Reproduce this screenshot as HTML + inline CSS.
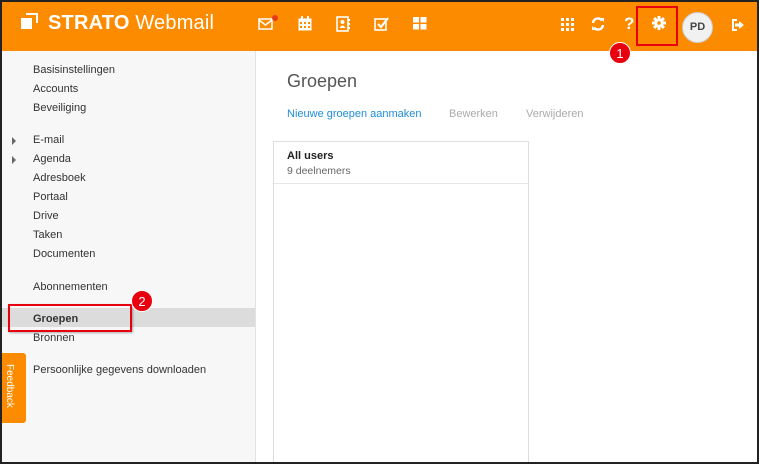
<!DOCTYPE html>
<html><head><meta charset="utf-8"><style>
*{box-sizing:border-box;margin:0;padding:0}
body{width:759px;height:464px;overflow:hidden;background:#222;font-family:"Liberation Sans","DejaVu Sans",sans-serif;position:relative}
#frame{position:absolute;left:2px;top:2px;width:755px;height:460px;background:#fff;overflow:hidden}
#hdr{position:absolute;left:0;top:0;width:755px;height:49px;background:#fd8b00}
#side{position:absolute;left:0;top:49px;width:254px;height:411px;background:#f7f7f7;border-right:1px solid #e2e2e2}
.it{position:absolute;left:31px;font-size:11px;color:#333}
.ar{position:absolute;left:10px;width:0;height:0;border-left:4px solid #666;border-top:4px solid transparent;border-bottom:4px solid transparent}
.w{position:absolute;background:#fff}
svg{position:absolute}
.badge{position:absolute;width:22px;height:22px;border-radius:50%;background:#e8000e;color:#fff;font-size:13px;text-align:center;line-height:22px;border:1px solid #fff}
</style></head><body><div id="frame">
<div id="hdr">
 <div class="w" style="left:19px;top:16px;width:11px;height:11px"></div>
 <div style="position:absolute;left:24px;top:11px;width:12px;height:10px;border-top:2px solid #fff;border-right:2px solid #fff"></div>
 <div style="position:absolute;left:46px;top:10px;font-size:20px;color:#fff;font-weight:bold;letter-spacing:0.2px">STRATO <span style="font-weight:normal">Webmail</span></div>
 <svg style="left:256px;top:13px" width="16" height="16" viewBox="0 0 16 16"><rect x="1" y="4" width="13" height="10" fill="none" stroke="#fff" stroke-width="1.5"/><path d="M1 5 L7.5 10 L14 5" fill="none" stroke="#fff" stroke-width="1.5"/></svg>
 <div style="position:absolute;left:270px;top:13px;width:6px;height:6px;border-radius:50%;background:#e53b1b"></div>
 <svg style="left:296px;top:14px" width="14" height="15" viewBox="0 0 14 15"><rect x="0.5" y="2.5" width="13" height="12" fill="#fff"/><g fill="#fd8b00"><rect x="2" y="6" width="2" height="2"/><rect x="6" y="6" width="2" height="2"/><rect x="10" y="6" width="2" height="2"/><rect x="2" y="10" width="2" height="2"/><rect x="6" y="10" width="2" height="2"/><rect x="10" y="10" width="2" height="2"/></g><rect x="3" y="0" width="2" height="4" fill="#fff"/><rect x="9" y="0" width="2" height="4" fill="#fff"/></svg>
 <svg style="left:334px;top:14px" width="14" height="16" viewBox="0 0 14 16"><rect x="1" y="1" width="11" height="14" fill="none" stroke="#fff" stroke-width="1.6"/><circle cx="6.5" cy="6" r="2" fill="#fff"/><path d="M3.5 12 Q6.5 7 9.5 12Z" fill="#fff"/><rect x="12" y="3" width="2" height="2" fill="#fff"/><rect x="12" y="7" width="2" height="2" fill="#fff"/><rect x="12" y="11" width="2" height="2" fill="#fff"/></svg>
 <svg style="left:372px;top:14px" width="16" height="15" viewBox="0 0 16 15"><rect x="1" y="3" width="11" height="11" fill="none" stroke="#fff" stroke-width="1.6"/><path d="M4 8 L7 11 L14 2" fill="none" stroke="#fff" stroke-width="2.2"/></svg>
 <svg style="left:411px;top:15px" width="14" height="13" viewBox="0 0 14 13"><rect x="0" y="0" width="6" height="5.5" fill="#fff"/><rect x="7.5" y="0" width="6" height="5.5" fill="#fff"/><rect x="0" y="7" width="6" height="5.5" fill="#fff"/><rect x="7.5" y="7" width="6" height="5.5" fill="#fff"/></svg>
 <svg style="left:559px;top:16px" width="13" height="13" viewBox="0 0 13 13" fill="#fff"><rect x="0" y="0" width="3" height="3"/><rect x="5" y="0" width="3" height="3"/><rect x="10" y="0" width="3" height="3"/><rect x="0" y="5" width="3" height="3"/><rect x="5" y="5" width="3" height="3"/><rect x="10" y="5" width="3" height="3"/><rect x="0" y="10" width="3" height="3"/><rect x="5" y="10" width="3" height="3"/><rect x="10" y="10" width="3" height="3"/></svg>
 <svg style="left:589px;top:15px" width="14" height="14" viewBox="0 0 14 14"><path d="M2 6 A5 5 0 0 1 11 3.5" fill="none" stroke="#fff" stroke-width="2.4"/><path d="M12 8 A5 5 0 0 1 3 10.5" fill="none" stroke="#fff" stroke-width="2.4"/><path d="M9 1 L13 1 L13 5Z" fill="#fff"/><path d="M5 13 L1 13 L1 9Z" fill="#fff"/></svg>
 <div style="position:absolute;left:622px;top:12px;color:#fff;font-weight:bold;font-size:17px">?</div>
 <svg style="left:650px;top:14px" width="14" height="14" viewBox="0 0 14 14"><g fill="#fff"><circle cx="7" cy="7" r="4.5"/><rect x="5.5" y="0" width="3" height="14"/><rect x="0" y="5.5" width="14" height="3"/><rect x="5.5" y="0" width="3" height="14" transform="rotate(45 7 7)"/><rect x="5.5" y="0" width="3" height="14" transform="rotate(-45 7 7)"/></g><circle cx="7" cy="7" r="1.8" fill="#fd8b00"/></svg>
 <div style="position:absolute;left:634px;top:4px;width:42px;height:40px;border:2px solid #e8000e"></div>
 <div style="position:absolute;left:680px;top:10px;width:31px;height:31px;border-radius:50%;background:#f1f1f1;border:1px solid #ccc;text-align:center;line-height:29px;font-size:11px;font-weight:bold;color:#444">PD</div>
 <svg style="left:730px;top:17px" width="12" height="12" viewBox="0 0 12 12"><path d="M5 1 L1 1 L1 11 L5 11" fill="none" stroke="#fff" stroke-width="2"/><rect x="3" y="4.5" width="5" height="3" fill="#fff"/><path d="M7 2 L12 6 L7 10Z" fill="#fff"/></svg>
</div>
<div class="badge" style="left:607px;top:40px">1</div>
<div id="side">
 <div class="it" style="top:13px">Basisinstellingen</div>
 <div class="it" style="top:32px">Accounts</div>
 <div class="it" style="top:51px">Beveiliging</div>
 <div class="ar" style="top:86px"></div><div class="it" style="top:83px">E-mail</div>
 <div class="ar" style="top:105px"></div><div class="it" style="top:102px">Agenda</div>
 <div class="it" style="top:121px">Adresboek</div>
 <div class="it" style="top:140px">Portaal</div>
 <div class="it" style="top:159px">Drive</div>
 <div class="it" style="top:178px">Taken</div>
 <div class="it" style="top:197px">Documenten</div>
 <div class="it" style="top:230px">Abonnementen</div>
 <div style="position:absolute;left:0;top:257px;width:253px;height:19px;background:#dcdcdc"></div>
 <div class="it" style="top:262px;font-weight:bold">Groepen</div>
 <div style="position:absolute;left:6px;top:253px;width:124px;height:28px;border:2px solid #e8000e;box-shadow:1px 1px 2px rgba(0,0,0,.3)"></div>
 <div class="it" style="top:281px">Bronnen</div>
 <div class="it" style="top:313px">Persoonlijke gegevens downloaden</div>
 <div style="position:absolute;left:0;top:302px;width:24px;height:70px;background:#fd8b00;border-radius:0 3px 3px 0"></div>
 <div style="position:absolute;left:2px;top:313px;color:#fff;font-size:10px;writing-mode:vertical-rl">Feedback</div>
</div>
<div class="badge" style="left:129px;top:288px">2</div>
<div style="position:absolute;left:285px;top:69px;font-size:18px;color:#555">Groepen</div>
<div style="position:absolute;left:285px;top:106px;font-size:11px;color:#1f8dd6">Nieuwe groepen aanmaken</div>
<div style="position:absolute;left:447px;top:106px;font-size:11px;color:#aaa">Bewerken</div>
<div style="position:absolute;left:524px;top:106px;font-size:11px;color:#aaa">Verwijderen</div>
<div style="position:absolute;left:271px;top:139px;width:256px;height:330px;border:1px solid #ddd">
 <div style="height:42px;border-bottom:1px solid #e6e6e6;padding:8px 0 0 13px">
  <div style="font-size:11px;font-weight:bold;color:#222">All users</div>
  <div style="font-size:10.5px;color:#666;margin-top:3px">9 deelnemers</div>
 </div>
</div>
</div></body></html>
